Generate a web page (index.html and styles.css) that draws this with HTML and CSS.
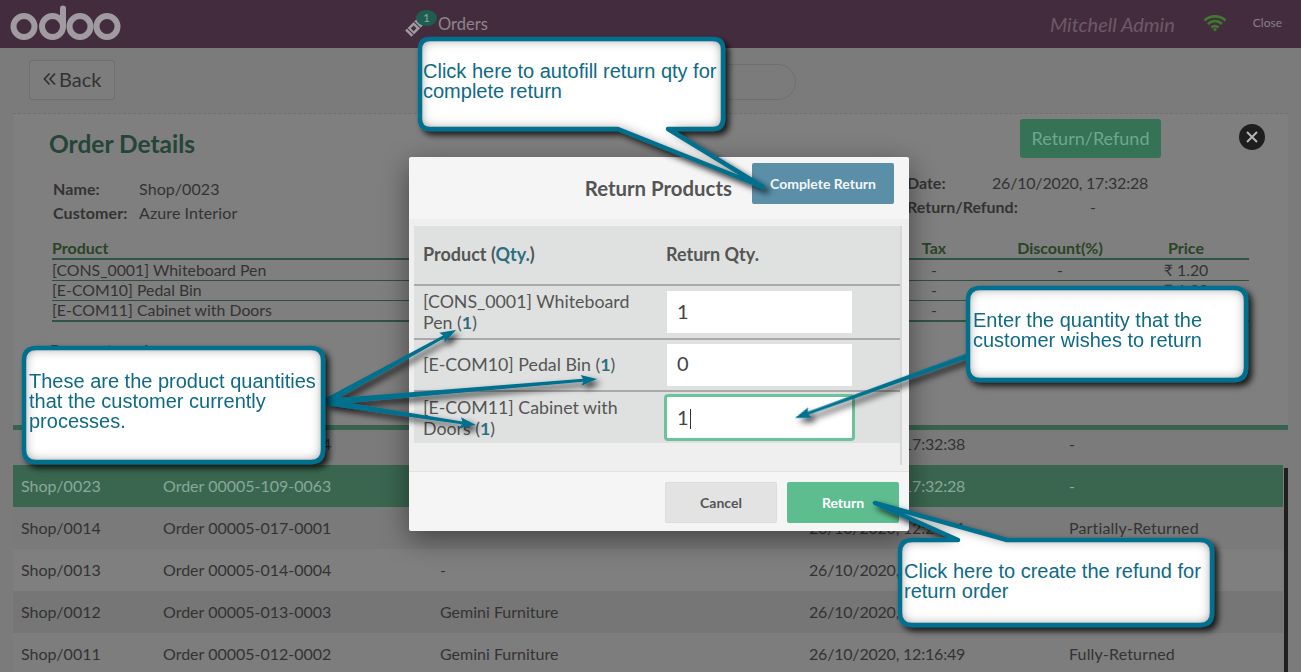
FILE: index.html
```html
<!DOCTYPE html>
<html lang="en">
<head>
<meta charset="utf-8">
<title>Return Products</title>
<link rel="stylesheet" href="styles.css">
</head>
<body>
<div class="page">
  <header class="topbar">
    <svg class="logo" width="111" height="36" viewBox="0 0 111 36" aria-label="odoo">
      <g fill="none" stroke="#a09ba0" stroke-width="6">
        <circle cx="14" cy="21.5" r="10.5"/>
        <circle cx="42.5" cy="21.5" r="10.5"/>
        <path d="M53 21.500V3.500" stroke-linecap="round"/>
        <circle cx="70" cy="21.500" r="10.5"/>
        <circle cx="97" cy="21.500" r="10.5"/>
      </g>
    </svg>
    <div class="orders">
      <span class="ticket">
        <svg width="18" height="18" viewBox="0 0 18 18"><g transform="rotate(-45 9 9)"><rect x="1" y="4.500" width="16" height="9" fill="#a09ba0"/><rect x="6.500" y="7" width="4" height="4" fill="#442c3f"/><path d="M4 4.500v9M13.500 4.500v9" stroke="#442c3f" stroke-width="1"/></g></svg>
        <span class="badge">1</span>
      </span>
      <span class="orders-label">Orders</span>
    </div>
    <div class="user">Mitchell Admin</div>
    <svg class="wifi" width="24" height="18" viewBox="0 0 24 18">
      <g fill="none" stroke="#3f7a2a" stroke-width="2.600">
        <path d="M1.500 6.500C7 1 17 1 22.500 6.500"/>
        <path d="M5 10C9 6 15 6 19 10"/>
        <path d="M8.500 13.500C10.500 11.500 13.500 11.500 15.500 13.500"/>
      </g>
      <path d="M10 15.500L12 13.500L14 15.500L12 17.500Z" fill="#3f7a2a"/>
    </svg>
    <div class="close-link">Close</div>
  </header>

  <div class="toolbar">
    <div class="back">
      <svg width="13" height="14" viewBox="0 0 13 14"><path d="M6.500 1.500L1.500 7L6.500 12.500M12 1.500L7 7L12 12.500" fill="none" stroke="#333" stroke-width="1.800"/></svg>
      <span>Back</span>
    </div>
    <div class="search"></div>
  </div>

  <section class="details">
    <div class="details-head">
      <h1 class="details-title">Order Details</h1>
      <div class="refund-btn">Return/Refund</div>
      <div class="round-close">
        <svg width="14" height="14" viewBox="0 0 14 14"><path d="M2 2L12 12M12 2L2 12" stroke="#b5b5b5" stroke-width="2"/></svg>
      </div>
    </div>
    <div class="info">
      <div class="info-left">
        <b>Name:</b><span>Shop/0023</span>
        <b>Customer:</b><span>Azure Interior</span>
      </div>
      <div class="info-right">
        <div class="info-row"><b class="label-date">Date:</b><span class="date">26/10/2020, 17:32:28</span></div>
        <div class="info-row"><b class="label-refund">Return/Refund:</b><span>-</span></div>
      </div>
    </div>
    <div class="lines">
      <div class="line line-head"><span>Product</span><span>Tax</span><span>Discount(%)</span><span>Price</span></div>
      <div class="line line-first"><span>[CONS_0001] Whiteboard Pen</span><span>-</span><span>-</span><span>₹ 1.20</span></div>
      <div class="line"><span>[E-COM10] Pedal Bin</span><span>-</span><span>-</span><span>₹ 1.20</span></div>
      <div class="line line-last"><span>[E-COM11] Cabinet with Doors</span><span>-</span><span>-</span><span>₹ 1.20</span></div>
    </div>
    <div class="payment">Payment mode</div>
  </section>

  <div class="list">
    <div class="rows">
      <div class="row row-first"><span>Shop/0024</span><span>Order 00005-110-0064</span><span>-</span><span class="date">26/10/2020, 17:32:38</span><span>-</span></div>
      <div class="row row-selected"><span>Shop/0023</span><span>Order 00005-109-0063</span><span>-</span><span class="date">26/10/2020, 17:32:28</span><span>-</span></div>
      <div class="row row-a"><span>Shop/0014</span><span>Order 00005-017-0001</span><span>-</span><span class="date">26/10/2020, 12:24:11</span><span class="status">Partially-Returned</span></div>
      <div class="row row-b"><span>Shop/0013</span><span>Order 00005-014-0004</span><span>-</span><span class="date">26/10/2020, 12:20:36</span><span></span></div>
      <div class="row row-c"><span>Shop/0012</span><span>Order 00005-013-0003</span><span>Gemini Furniture</span><span class="date">26/10/2020, 12:18:20</span><span></span></div>
      <div class="row row-d"><span>Shop/0011</span><span>Order 00005-012-0002</span><span>Gemini Furniture</span><span class="date">26/10/2020, 12:16:49</span><span class="status">Fully-Returned</span></div>
    </div>
    <div class="track"></div>
  </div>
</div>

<div class="modal">
  <div class="modal-head">
    <div class="modal-title">Return Products</div>
    <div class="complete-btn">Complete Return</div>
  </div>
  <div class="modal-body">
    <div class="modal-scroll">
      <div class="ret-row ret-head"><span>Product (<em>Qty.</em>)</span><span>Return Qty.</span></div>
      <div class="ret-row ret-1"><span>[CONS_0001] Whiteboard Pen (<em>1</em>)</span><div class="qty">1</div></div>
      <div class="ret-row ret-2"><span>[E-COM10] Pedal Bin (<em>1</em>)</span><div class="qty">0</div></div>
      <div class="ret-row ret-3"><span>[E-COM11] Cabinet with Doors (<em>1</em>)</span><div class="qty qty-focus">1<i class="caret"></i></div></div>
    </div>
  </div>
  <div class="modal-foot">
    <div class="btn btn-cancel">Cancel</div>
    <div class="btn btn-return">Return</div>
  </div>
</div>

<svg class="callouts" width="1301" height="672" viewBox="0 0 1301 672">
  <defs>
    <filter id="inner" filterUnits="userSpaceOnUse" x="0" y="0" width="1301" height="672">
      <feComponentTransfer in="SourceAlpha" result="inv"><feFuncA type="table" tableValues="1 0"/></feComponentTransfer>
      <feGaussianBlur in="inv" stdDeviation="6" result="blur"/>
      <feFlood flood-color="#222222" result="col"/>
      <feComposite in="col" in2="blur" operator="in" result="sh"/>
      <feComposite in="sh" in2="SourceAlpha" operator="in" result="clip"/>
      <feMerge><feMergeNode in="SourceGraphic"/><feMergeNode in="clip"/></feMerge>
    </filter>
    <filter id="drop" filterUnits="userSpaceOnUse" x="0" y="0" width="1301" height="672">
      <feDropShadow dx="4" dy="4" stdDeviation="3" flood-color="#000" flood-opacity=".8"/>
    </filter>
    <path id="shape-a" d="M430 39H713Q723 39 723 49V119Q723 129 713 129H668L763 187L618 129H430Q420 129 420 119V49Q420 39 430 39Z"/>
    <path id="shape-b" d="M36 348H311Q323 348 323 360V450Q323 462 311 462H36Q24 462 24 450V360Q24 348 36 348Z"/>
    <path id="shape-c" d="M980 288H1234Q1246 288 1246 300V368Q1246 380 1234 380H980Q968 380 968 368V300Q968 288 980 288Z"/>
    <path id="shape-d" d="M912 540H958L875 503L1007 540H1200Q1212 540 1212 552V613Q1212 625 1200 625H912Q900 625 900 613V552Q900 540 912 540Z"/>
  </defs>
  <g class="arrow" filter="url(#drop)">
    <path transform="translate(325 402) rotate(-28.8)" d="M0 -3L135.500 -1.500L133.500 -5.500L149.500 0L133.500 5.500L135.500 1.500L0 3Z"/>
    <path transform="translate(325 402) rotate(-4.83)" d="M0 -3L259 -1.500L257 -5.500L273 0L257 5.500L259 1.500L0 3Z"/>
    <path transform="translate(325 402) rotate(8.66)" d="M0 -3L138.700 -1.500L136.700 -5.500L152.700 0L136.700 5.500L138.700 1.500L0 3Z"/>
    <path transform="translate(970 355) rotate(160.2)" d="M0 -2.500L172 -1.500L170 -5.500L186 0L170 5.500L172 1.500L0 2.500Z"/>
  </g>
  <g filter="url(#drop)">
    <use href="#shape-a" class="fill" filter="url(#inner)"/><use href="#shape-a" class="edge"/>
  </g>
  <g filter="url(#drop)">
    <use href="#shape-b" class="fill" filter="url(#inner)"/><use href="#shape-b" class="edge"/>
  </g>
  <g filter="url(#drop)">
    <use href="#shape-c" class="fill" filter="url(#inner)"/><use href="#shape-c" class="edge"/>
  </g>
  <g filter="url(#drop)">
    <use href="#shape-d" class="fill" filter="url(#inner)"/><use href="#shape-d" class="edge"/>
  </g>
</svg>

<div class="note note-a">Click here to autofill return qty for<br>complete return</div>
<div class="note note-b">These are the product quantities<br>that the customer currently<br>processes.</div>
<div class="note note-c">Enter the quantity that the<br>customer wishes to return</div>
<div class="note note-d">Click here to create the refund for<br>return order</div>
</body>
</html>
```
FILE: styles.css
```css
* { box-sizing: border-box; }
html, body { margin: 0; padding: 0; }
body {
  width: 1301px;
  height: 672px;
  overflow: hidden;
  position: relative;
  background: #7b7b7b;
  font-family: Lato, "Open Sans", sans-serif;
  font-size: 16px;
  color: #333;
}
.page { height: 672px; overflow: hidden; }

/* top bar */
.topbar {
  height: 48px;
  background: #442c3f;
  display: flex;
  align-items: center;
}
.logo { margin: -3px 0 0 10px; flex: none; }
.orders { display: flex; align-items: center; margin-left: 284px; }
.ticket { position: relative; width: 33px; height: 26px; display: block; }
.ticket svg { position: absolute; left: 0; top: 8px; }
.badge {
  position: absolute;
  left: 11px;
  top: -1px;
  width: 21px;
  height: 16px;
  border-radius: 50%;
  background: #1f5d50;
  color: #86a59c;
  font-size: 12px;
  line-height: 15px;
  text-align: center;
}
.orders-label { color: #8d858b; font-size: 16.5px; }
.user {
  margin-left: auto;
  color: #6c5a68;
  font-size: 20px;
  font-style: italic;
}
.wifi { margin-left: 28px; margin-top: -2px; }
.close-link { color: #87808a; font-size: 12px; margin: -3px 19px 0 26px; }

/* toolbar */
.toolbar { display: flex; padding: 12px 0 0 29px; height: 52px; }
.back {
  width: 86px;
  height: 40px;
  border: 1px solid #6f6f6f;
  border-radius: 3px;
  background: #7d7d7d;
  display: flex;
  align-items: center;
  gap: 3px;
  padding: 0 0 2px 13px;
  font-size: 20px;
}
.search {
  width: 296px;
  height: 36px;
  margin: 4px 0 0 385px;
  border: 1px solid #6f6f6f;
  border-radius: 18px;
}

/* order details */
.details {
  margin: 13px 13px 0;
  width: 1275px;
  height: 312px;
  background: #7f7f7f;
  border-top: 1px dashed #707070;
  overflow: hidden;
}
.details-head { display: flex; align-items: flex-start; padding: 5px 0 0 36px; height: 44px; }
.details-title { margin: 10px 0 0; font-size: 24.5px; line-height: 30px; color: #244538; font-weight: 700; }
.refund-btn {
  margin-left: auto;
  width: 141px;
  height: 39px;
  background: #357256;
  border-radius: 3px;
  color: #6ea88c;
  font-size: 18px;
  line-height: 38px;
  text-align: center;
}
.round-close {
  width: 26px;
  height: 26px;
  margin: 5px 23px 0 78px;
  border-radius: 50%;
  background: #1e1e1e;
  display: flex;
  align-items: center;
  justify-content: center;
}
.info { display: flex; justify-content: space-between; margin-top: 13px; height: 48px; }
.info-left {
  margin: 6px 0 0 40px;
  display: grid;
  grid-template-columns: 86px auto;
  grid-auto-rows: 24px;
  line-height: 24px;
  letter-spacing: .1px;
}
.info-right { width: 381px; line-height: 24px; }
.info-row { display: flex; }
.label-date { width: 85px; }
.label-refund { width: 183px; }
.date { letter-spacing: -.2px; }
.status { letter-spacing: .15px; }
.lines { margin: 19px 0 0 39px; width: 1197px; }
.line {
  display: grid;
  grid-template-columns: 1fr 126px 126px 126px;
  height: 20px;
  line-height: 18px;
  font-size: 15.85px;
  border-bottom: 1px solid #2f4f43;
}
.line span:not(:first-child) { text-align: center; }
.line-head {
  height: 22px;
  line-height: 20px;
  font-size: 16px;
  border-bottom: 2px solid #2f5347;
  font-weight: 700;
  color: #2a4426;
}
.line-first { height: 21px; line-height: 20px; }
.line-last { height: 21px; border-bottom: 2px solid #2f5347; }
.payment { margin: 18px 0 0 37px; font-weight: 700; }

/* order list */
.list { display: flex; margin-left: 13px; width: 1275px; border-top: 5px solid #376350; }
.rows { width: 1270px; }
.track { width: 4px; margin: 38px 0 0 1px; background: #1f1f1f; }
.row {
  display: grid;
  grid-template-columns: 142px 277px 369px 260px 1fr;
  height: 42px;
  padding: 0 0 2px 8px;
  align-items: center;
  white-space: nowrap;
}
.row-first { height: 35px; padding-bottom: 9px; background: #7b7b7b; }
.row-selected { background: #3a6650; color: #88a898; }
.row-a { background: #7a7a7a; }
.row-b { background: #7f7f7f; }
.row-c { background: #767676; }
.row-d { background: #7d7d7d; }

/* modal */
.modal {
  position: absolute;
  left: 409px;
  top: 157px;
  width: 500px;
  height: 374px;
  display: flex;
  flex-direction: column;
  background: #f5f5f5;
  border-radius: 2px;
  box-shadow: 0 8px 28px rgba(0, 0, 0, .45);
  color: #555;
}
.modal-head { height: 62px; display: flex; justify-content: flex-end; align-items: flex-start; padding-right: 15px; }
.modal-title { font-size: 20.4px; font-weight: 700; margin-top: 19px; color: #555; }
.complete-btn {
  width: 142px;
  height: 41px;
  margin: 6px 0 0 20px;
  background: #5b8fa8;
  border-radius: 2px;
  color: #f4f7f8;
  font-size: 14px;
  font-weight: 700;
  line-height: 41px;
  text-align: center;
}
.modal-body { height: 252px; background: #efefef; padding: 7px 0 0 5px; }
.modal-scroll { width: 488px; height: 239px; border-right: 2px solid #d8d8d8; }
.ret-row {
  display: grid;
  grid-template-columns: 244px 1fr;
  align-items: center;
  padding-left: 9px;
  background: #dfe1e0;
  font-size: 17.8px;
  line-height: 21px;
  border-bottom: 2px solid #a9a9a9;
}
.ret-row > span:first-child { padding-right: 22px; }
.ret-row em { font-style: normal; font-weight: 700; color: #2d6f80; }
.ret-head { height: 60px; font-size: 18px; font-weight: 700; }
.ret-head > span { margin: -2px 0 0 0; }
.ret-head > span + span { margin-left: -1px; }
.ret-1 { height: 54px; }
.ret-2 { height: 52px; }
.ret-2 > span { margin-top: -2px; }
.ret-2 .qty { line-height: 38px; }
.ret-3 { height: 51px; border-bottom: 0; }
.qty {
  width: 185px;
  height: 42px;
  background: #fff;
  color: #444;
  font-size: 20px;
  line-height: 40px;
  padding-left: 10px;
}
.qty-focus {
  width: 191px;
  height: 47px;
  margin-left: -3px;
  border: 3px solid #6cc39a;
  border-radius: 4px;
  line-height: 41px;
}
.caret { display: inline-block; width: 1px; height: 20px; background: #333; vertical-align: -4px; margin-left: 1px; }
.modal-foot {
  height: 60px;
  border-top: 1px solid #e2e2e2;
  display: flex;
  justify-content: flex-end;
  gap: 10px;
  padding: 10px 10px 0 0;
}
.btn {
  width: 112px;
  height: 41px;
  border-radius: 2px;
  font-size: 14px;
  font-weight: 700;
  line-height: 41px;
  text-align: center;
}
.btn-cancel { background: #e3e3e3; color: #555; border: 1px solid #ddd; line-height: 39px; }
.btn-return { background: #5dbd8f; color: #fff; }

/* annotation callouts */
.callouts { position: absolute; left: 0; top: 0; pointer-events: none; }
.fill { fill: #fff; }
.edge { fill: none; stroke: #06708f; stroke-width: 4.5; stroke-linejoin: round; }
.arrow path { fill: #06708f; }
.note {
  position: absolute;
  font-family: "Liberation Sans", Arial, sans-serif;
  font-size: 20px;
  line-height: 20px;
  color: #0e6a86;
  white-space: nowrap;
}
.note-a { left: 423px; top: 61px; }
.note-b { left: 29px; top: 371px; }
.note-c { left: 973px; top: 310px; }
.note-d { left: 904px; top: 561px; }
```
